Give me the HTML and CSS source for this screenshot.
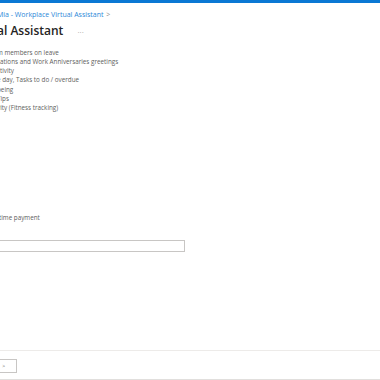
FILE: index.html
```html
<!DOCTYPE html>
<html lang="en">
<head>
  <meta charset="UTF-8" />
  <meta name="viewport" content="width=device-width, initial-scale=1.0"/>
  <title>Mia - Workplace Virtual Assistant</title>
  <link rel="stylesheet" href="styles.css">
</head>
<body>

  <div class="topbar"></div>

  <main class="content">
    <nav class="crumbs">Mia - Workplace Virtual Assistant <span class="chev">&gt;</span></nav>

    <h1 class="title">al Assistant <span class="more">···</span></h1>

    <ul class="features">
      <li>m members on leave</li>
      <li>cations and Work Anniversaries greetings</li>
      <li>ctivity</li>
      <li>e day, Tasks to do / overdue</li>
      <li>being</li>
      <li>Tips</li>
      <li>vity (Fitness tracking)</li>
    </ul>

    <p class="note">-time payment</p>
    <input class="field" type="text">
  </main>

  <footer class="actions">
    <button class="btn">&gt;</button>
  </footer>

</body>
</html>
```

FILE: styles.css
```css
* {margin:0; padding:0; box-sizing:border-box;}
html, body {height: 100%;}
body {
  font-family: "Open Sans", "Noto Sans", sans-serif;
  color: #323130;
  background: #fff;
  overflow: hidden;
  display: flex;
  flex-direction: column;
}

.topbar {
  height: 3px;
  background: #0b78d4;
  flex-shrink: 0;
}

.content {
  flex: 1;
  margin-left: -3px;
}

.crumbs {
  margin: 7px 0 0 0;
  font-size: 7px;
  line-height: 10px;
  color: #2b88d8;
}

.crumbs .chev {color: #8a8886; margin-left: 1px;}

.title {
  margin-top: 3px;
  font-size: 12px;
  font-weight: 600;
  line-height: 16px;
  color: #252423;
}

.title .more {
  font-size: 8px;
  font-weight: 400;
  color: #a19f9d;
  margin-left: 11px;
  vertical-align: middle;
}

.features {
  list-style: none;
  margin-top: 8px;
  font-size: 6.3px;
  line-height: 9.2px;
  color: #605e5c;
}

.note {
  margin-top: 101px;
  font-size: 6.3px;
  line-height: 9px;
  color: #605e5c;
}

.field {
  display: block;
  margin-top: 18px;
  margin-left: -20px;
  width: 208px;
  height: 12px;
  border: 1px solid #c8c6c4;
  background: #fff;
}

.actions {
  flex-shrink: 0;
  height: 30px;
  border-top: 1px solid #edebe9;
  border-bottom: 1px solid #e1dfdd;
  padding-top: 8px;
}

.btn {
  display: block;
  margin-left: -30px;
  width: 47px;
  height: 14px;
  border: 1px solid #c8c6c4;
  background: #fff;
  font-family: inherit;
  font-size: 5px;
  color: #605e5c;
  text-align: right;
  padding-right: 11px;
}
```
